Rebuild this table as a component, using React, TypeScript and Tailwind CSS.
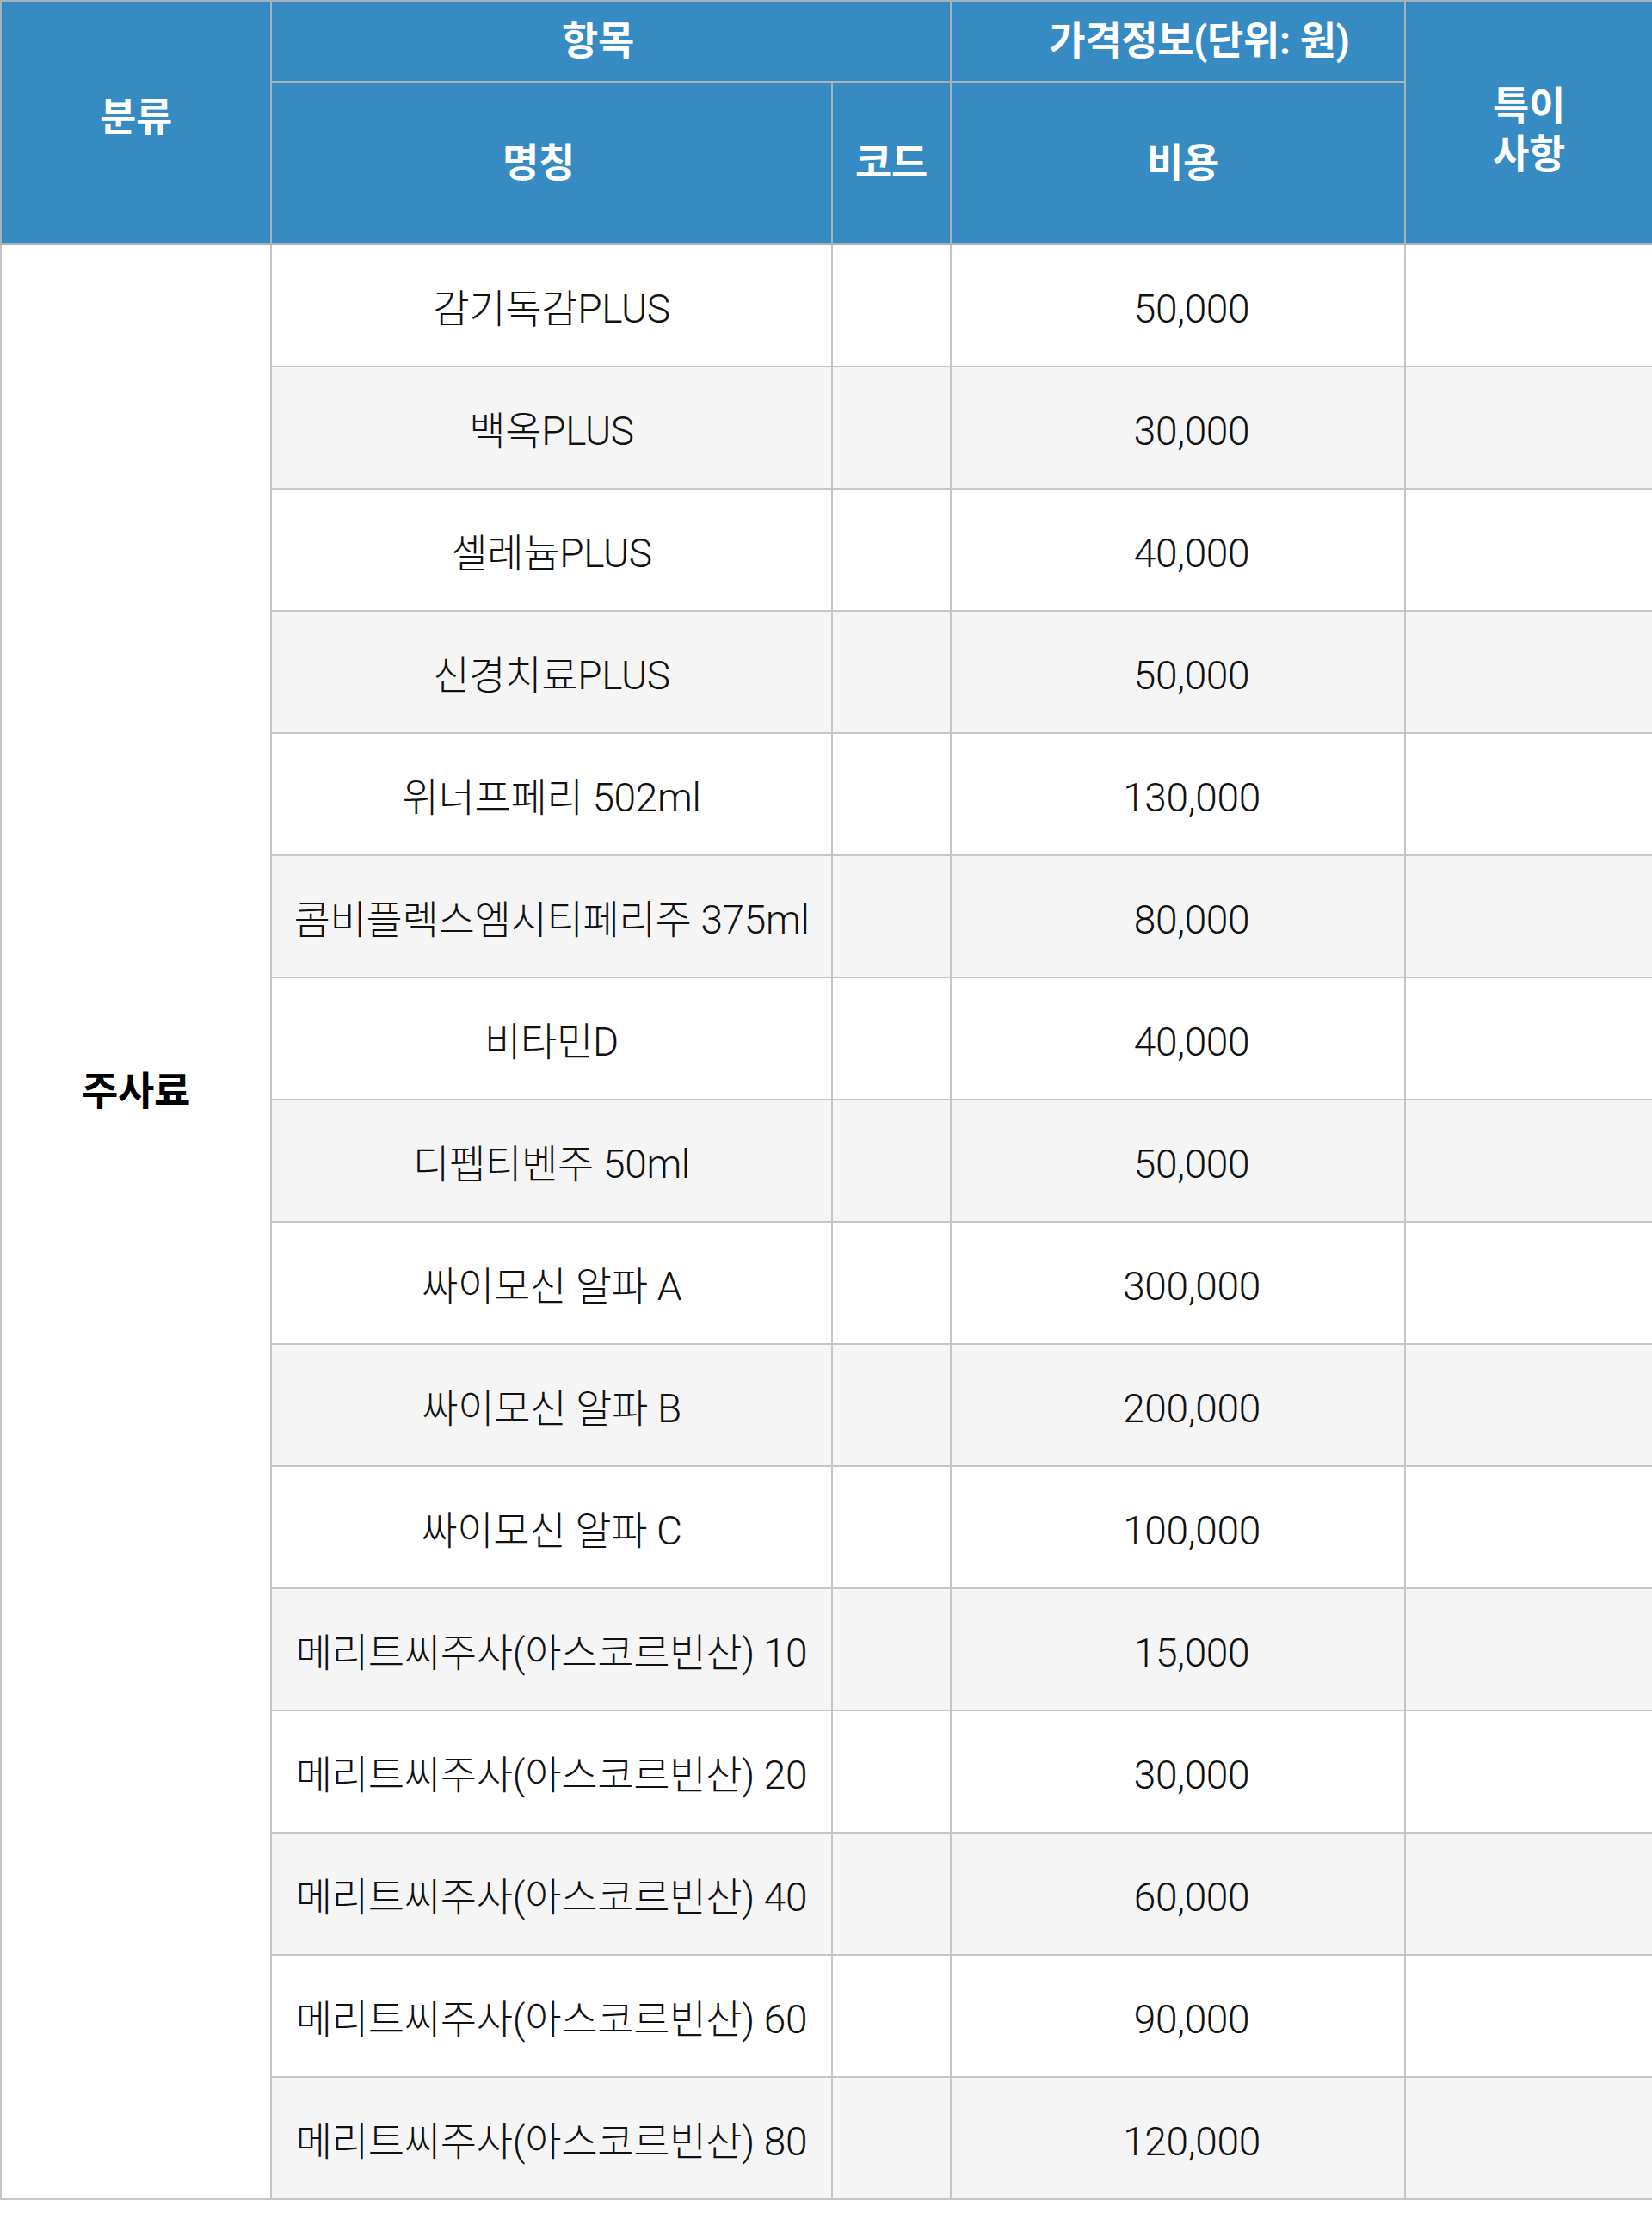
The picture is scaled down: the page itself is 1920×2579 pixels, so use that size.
const rows: [string, string][] = [
  ["감기독감PLUS", "50,000"],
  ["백옥PLUS", "30,000"],
  ["셀레늄PLUS", "40,000"],
  ["신경치료PLUS", "50,000"],
  ["위너프페리 502ml", "130,000"],
  ["콤비플렉스엠시티페리주 375ml", "80,000"],
  ["비타민D", "40,000"],
  ["디펩티벤주 50ml", "50,000"],
  ["싸이모신 알파 A", "300,000"],
  ["싸이모신 알파 B", "200,000"],
  ["싸이모신 알파 C", "100,000"],
  ["메리트씨주사(아스코르빈산) 10", "15,000"],
  ["메리트씨주사(아스코르빈산) 20", "30,000"],
  ["메리트씨주사(아스코르빈산) 40", "60,000"],
  ["메리트씨주사(아스코르빈산) 60", "90,000"],
  ["메리트씨주사(아스코르빈산) 80", "120,000"],
];

export default function App() {
  return (
    <div className="bg-white font-['Roboto','Noto_Sans_CJK_KR',sans-serif] tracking-[-0.02em]">
      <table className="w-[1920px] table-fixed border-collapse border-2 border-[#c6c6c6] text-center">
        <colgroup>
          <col className="w-[314px]" />
          <col className="w-[652px]" />
          <col className="w-[138px]" />
          <col className="w-[528px]" />
          <col className="w-[288px]" />
        </colgroup>
        <thead className="bg-[#378bc3] text-[46px] font-bold leading-[1.2] text-white">
          <tr className="h-[94px]">
            <th rowSpan={2} className="border-2 border-[#a8b2ba] pb-[12px] align-middle">
              분류
            </th>
            <th colSpan={2} className="border-2 border-[#a8b2ba] pr-[30px] align-middle">
              항목
            </th>
            <th className="border-2 border-[#a8b2ba] pl-[50px] align-middle">가격정보(단위: 원)</th>
            <th rowSpan={2} className="border-2 border-[#a8b2ba] pt-[18px] align-middle">
              특이
              <br />
              사항
            </th>
          </tr>
          <tr className="h-[189px]">
            <th className="border-2 border-[#a8b2ba] pr-[30px] align-middle">명칭</th>
            <th className="border-2 border-[#a8b2ba] align-middle">코드</th>
            <th className="border-2 border-[#a8b2ba] pl-[12px] align-middle">비용</th>
          </tr>
        </thead>
        <tbody className="text-[46px] font-light leading-none text-[#111]">
          {rows.map(([name, price], i) => (
            <tr key={name} className={`h-[142px] ${i % 2 === 1 ? "bg-[#f5f5f5]" : "bg-white"}`}>
              {i === 0 && (
                <td
                  rowSpan={rows.length}
                  className="border-2 border-[#c6c6c6] bg-white pb-[304px] align-middle font-bold text-black"
                >
                  주사료
                </td>
              )}
              <td className="border-2 border-[#c6c6c6] pt-[8px] align-middle">{name}</td>
              <td className="border-2 border-[#c6c6c6]" />
              <td className="border-2 border-[#c6c6c6] pl-[32px] pt-[8px] align-middle">{price}</td>
              <td className="border-2 border-[#c6c6c6]" />
            </tr>
          ))}
        </tbody>
      </table>
    </div>
  );
}
